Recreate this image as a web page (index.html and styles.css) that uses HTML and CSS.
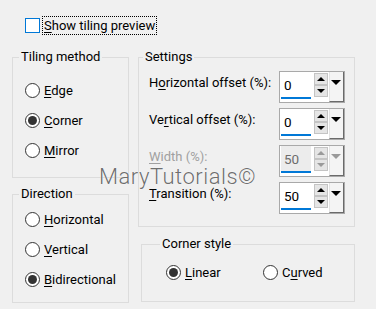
FILE: index.html
```html
<!DOCTYPE html>
<html lang="en">
<head>
    <meta charset="UTF-8">
    <meta name="viewport" content="width=device-width, initial-scale=1.0">
    <title>Tiling</title>
    <link rel="stylesheet" href="styles.css">
</head>
<body>
    <div class="dialog">
        <!-- Preview toggle -->
        <label class="check-row">
            <span class="checkbox"></span>
            <span class="check-text"><u>S</u>how tiling preview</span>
        </label>

        <div class="columns">
            <div class="col-left">
                <fieldset class="group tiling">
                    <legend>Tiling method</legend>
                    <div class="radio-row"><span class="radio"></span><span><u>E</u>dge</span></div>
                    <div class="radio-row"><span class="radio on"></span><span><u>C</u>orner</span></div>
                    <div class="radio-row"><span class="radio"></span><span><u>M</u>irror</span></div>
                </fieldset>

                <fieldset class="group direction">
                    <legend>Direction</legend>
                    <div class="radio-row"><span class="radio"></span><span><u>H</u>orizontal</span></div>
                    <div class="radio-row"><span class="radio"></span><span><u>V</u>ertical</span></div>
                    <div class="radio-row"><span class="radio on"></span><span><u>B</u>idirectional</span></div>
                </fieldset>
            </div>

            <div class="col-right">
                <fieldset class="group settings">
                    <legend>Settings</legend>
                    <div class="field-row">
                        <span class="field-label">H<u>o</u>rizontal offset (%):</span>
                        <div class="spin">
                            <div class="spin-value">0</div>
                            <div class="spin-buttons"><span class="step up"></span><span class="step down"></span></div>
                            <div class="spin-drop"></div>
                        </div>
                    </div>
                    <div class="field-row">
                        <span class="field-label">Ve<u>r</u>tical offset (%):</span>
                        <div class="spin">
                            <div class="spin-value">0</div>
                            <div class="spin-buttons"><span class="step up"></span><span class="step down"></span></div>
                            <div class="spin-drop"></div>
                        </div>
                    </div>
                    <div class="field-row disabled">
                        <span class="field-label"><u>W</u>idth (%):</span>
                        <div class="spin">
                            <div class="spin-value">50</div>
                            <div class="spin-buttons"><span class="step up"></span><span class="step down"></span></div>
                            <div class="spin-drop"></div>
                        </div>
                    </div>
                    <div class="field-row">
                        <span class="field-label"><u>T</u>ransition (%):</span>
                        <div class="spin">
                            <div class="spin-value">50</div>
                            <div class="spin-buttons"><span class="step up"></span><span class="step down"></span></div>
                            <div class="spin-drop"></div>
                        </div>
                    </div>
                </fieldset>

                <fieldset class="group corner">
                    <legend>Corner style</legend>
                    <div class="corner-row">
                        <div class="radio-item first"><span class="radio on"></span><span><u>L</u>inear</span></div>
                        <div class="radio-item"><span class="radio"></span><span>C<u>u</u>rved</span></div>
                    </div>
                </fieldset>
            </div>
        </div>

        <div class="watermark">MaryTutorials©</div>
    </div>
</body>
</html>
```

FILE: styles.css
```css
* {
    box-sizing: border-box;
}

body {
    margin: 0;
    background: #f0f0f0;
    color: #000;
    font-family: Roboto, Lato, sans-serif;
    font-size: 13px;
}

u {
    text-decoration-thickness: 1px;
    text-underline-offset: 2px;
}

.dialog {
    position: relative;
    width: 376px;
    height: 309px;
    padding: 16px 0 0 12px;
    overflow: hidden;
    white-space: nowrap;
}

/* checkbox at top */
.check-row {
    display: flex;
    align-items: center;
    height: 19px;
    margin-left: 13px;
}

.checkbox {
    width: 15px;
    height: 15px;
    border: 1px solid #0078d7;
    background: #fff;
    margin-right: 2px;
}

.check-text {
    height: 19px;
    line-height: 17px;
    padding: 0 1px;
    border: 1px dotted #000;
}

.columns {
    display: flex;
    margin-top: 13px;
}

.col-left {
    width: 117px;
}

.col-right {
    width: 217px;
    margin-left: 9px;
}

/* group boxes */
.group {
    margin: 0;
    min-width: 0;
    border: 1px solid #dcdcdc;
    padding: 0 8px 0 12px;
}

.group legend {
    padding: 0 2px;
    margin-left: -6px;
    line-height: 18px;
}

.tiling {
    padding-top: 9px;
    padding-bottom: 12px;
}

.direction {
    margin-top: 7px;
    padding-top: 1px;
    padding-bottom: 8px;
}

.radio-row {
    display: flex;
    align-items: center;
    height: 30px;
}

.radio {
    display: flex;
    align-items: center;
    justify-content: center;
    width: 15px;
    height: 15px;
    margin-right: 4px;
    border: 1px solid #333;
    border-radius: 50%;
    background: #fff;
    flex-shrink: 0;
}

.radio.on::after {
    content: "";
    width: 9px;
    height: 9px;
    border-radius: 50%;
    background: #333;
}

/* settings */
.settings {
    padding: 5px 9px 12px 10px;
}

.field-row {
    display: flex;
    justify-content: space-between;
    align-items: flex-start;
    height: 32px;
}

.field-row + .field-row {
    margin-top: 5px;
}

.field-label {
    padding-top: 2px;
    line-height: 20px;
}

.spin {
    display: flex;
    width: 66px;
    height: 32px;
    border: 1px solid #a9a9a9;
    background: #fff;
    flex-shrink: 0;
}

.spin-value {
    width: 31px;
    height: 27px;
    margin-left: 1px;
    padding-left: 3px;
    line-height: 26px;
    font-size: 13.5px;
    border-bottom: 2px solid #0078d7;
}

.spin-buttons {
    display: flex;
    flex-direction: column;
    margin: 1px 0 0 3px;
}

.step {
    display: flex;
    align-items: center;
    justify-content: center;
    width: 14px;
    height: 12px;
    border: 1px solid #c4c4c4;
    background: #e5e5e5;
}

.step::after {
    content: "";
    border-left: 4px solid transparent;
    border-right: 4px solid transparent;
}

.step.up::after {
    border-bottom: 4px solid #000;
}

.step.down::after {
    border-top: 4px solid #000;
}

.spin-drop {
    display: flex;
    justify-content: center;
    width: 16px;
    height: 30px;
    margin-left: 1px;
    padding-top: 8px;
    background: #f4f4f4;
    border-left: 1px solid #e3e3e3;
    border-right: 1px solid #6a6a6a;
    border-bottom: 1px solid #6a6a6a;
}

.spin-drop::after {
    content: "";
    height: 0;
    border-left: 5px solid transparent;
    border-right: 5px solid transparent;
    border-top: 5px solid #000;
}

.disabled .field-label {
    color: #a0a0a0;
}

.disabled .spin-value {
    background: #ececec;
    color: #6d6d6d;
}

.disabled .step.up::after {
    border-bottom-color: #9a9a9a;
}

.disabled .step.down::after {
    border-top-color: #9a9a9a;
}

.disabled .spin-drop::after {
    border-top-color: #9a9a9a;
}

/* corner style */
.corner {
    margin-top: 8px;
    margin-left: 3px;
    width: 214px;
    padding: 9px 8px 19px 24px;
}

.corner-row {
    display: flex;
    height: 20px;
}

.radio-item {
    display: flex;
    align-items: center;
}

.radio-item.first {
    width: 97px;
}

.watermark {
    position: absolute;
    left: 99px;
    top: 164px;
    font-size: 22px;
    font-weight: 300;
    color: #6e6e6e;
    letter-spacing: 0.5px;
    text-shadow: 0 0 1px #fff, 0 0 1px #fff;
}
```
